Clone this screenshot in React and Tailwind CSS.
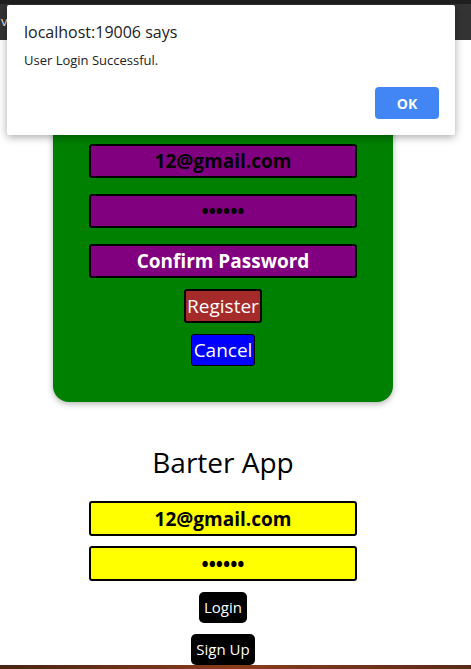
import React from 'react';

const font = { fontFamily: '"Open Sans", "Noto Sans", sans-serif' };

const App = () => {
  return (
    <div className="relative w-[471px] h-[669px] overflow-hidden bg-white" style={font}>
      {/* top bar behind the alert */}
      <div className="h-[40px] border-t-[4px] border-[#1f1f1f] bg-[#333333] flex items-center">
        <span className="text-[13px] text-[#e8e8e8] pl-[1px]">va</span>
      </div>

      <div className="w-[446px] flex flex-col items-center">
        {/* register card */}
        <div className="w-[340px] bg-[#008000] rounded-b-[16px] shadow-[0_2px_6px_rgba(0,0,0,0.3)] flex flex-col items-center pt-[4px] pb-[36px]">
          <input
            readOnly
            placeholder="First Name"
            className="w-[268px] h-[34px] mb-[16px] border-2 border-black rounded-[3px] bg-[#800080] text-center text-[19px] font-bold text-black placeholder:text-white outline-none"
          />
          <input
            readOnly
            placeholder="Last Name"
            className="w-[268px] h-[34px] mb-[16px] border-2 border-black rounded-[3px] bg-[#800080] text-center text-[19px] font-bold text-black placeholder:text-white outline-none"
          />
          <input
            readOnly
            value="12@gmail.com"
            className="w-[268px] h-[34px] mb-[16px] border-2 border-black rounded-[3px] bg-[#800080] text-center text-[19px] font-bold text-black outline-none"
          />
          <input
            readOnly
            type="password"
            value="123456"
            className="w-[268px] h-[34px] mb-[16px] border-2 border-black rounded-[3px] bg-[#800080] text-center text-[19px] font-bold text-black outline-none"
          />
          <input
            readOnly
            placeholder="Confirm Password"
            className="w-[268px] h-[34px] border-2 border-black rounded-[3px] bg-[#800080] text-center text-[19px] font-bold text-black placeholder:text-white outline-none"
          />
          <button className="mt-[11px] w-[78px] h-[34px] border-2 border-black rounded-[3px] bg-[#a52a2a] text-white text-[19px] leading-none">
            Register
          </button>
          <button className="mt-[11px] w-[64px] h-[32px] border-[1.5px] border-black rounded-[3px] bg-[#0000ff] text-white text-[19px] leading-none">
            Cancel
          </button>
        </div>

        {/* login */}
        <h1 className="mt-[40px] text-[28px] leading-[40px] text-black">Barter App</h1>
        <input
          readOnly
          value="12@gmail.com"
          className="mt-[19px] w-[268px] h-[35px] border-2 border-black rounded-[3px] bg-[#ffff00] text-center text-[19px] font-bold text-black outline-none"
        />
        <input
          readOnly
          type="password"
          value="123456"
          className="mt-[10px] w-[268px] h-[35px] border-2 border-black rounded-[3px] bg-[#ffff00] text-center text-[19px] font-bold text-black outline-none"
        />
        <button className="mt-[11px] w-[48px] h-[31px] rounded-[5px] bg-black text-white text-[15px] leading-none">
          Login
        </button>
        <button className="mt-[11px] w-[64px] h-[31px] rounded-[5px] bg-black text-white text-[15px] leading-none">
          Sign Up
        </button>
      </div>

      {/* desktop strip at the bottom */}
      <div className="absolute left-0 right-0 bottom-0 h-[4px] bg-gradient-to-r from-[#4a2414] via-[#8a3c1c] to-[#5a2a18]" />

      {/* alert dialog */}
      <div className="absolute left-[7px] top-[5px] w-[448px] h-[130px] bg-white rounded-[2px] shadow-[0_2px_8px_rgba(0,0,0,0.35)] pl-[17px] pr-[16px] pt-[16px]">
        <div className="text-[16px] text-[#202124] leading-[22px]">localhost:19006 says</div>
        <div className="mt-[8px] text-[13px] text-[#202124] leading-[18px]">User Login Successful.</div>
        <div className="flex justify-end mt-[18px]">
          <button className="w-[64px] h-[32px] rounded-[4px] bg-[#4285f4] text-white text-[14px] font-bold">
            OK
          </button>
        </div>
      </div>
    </div>
  );
};

export default App;
